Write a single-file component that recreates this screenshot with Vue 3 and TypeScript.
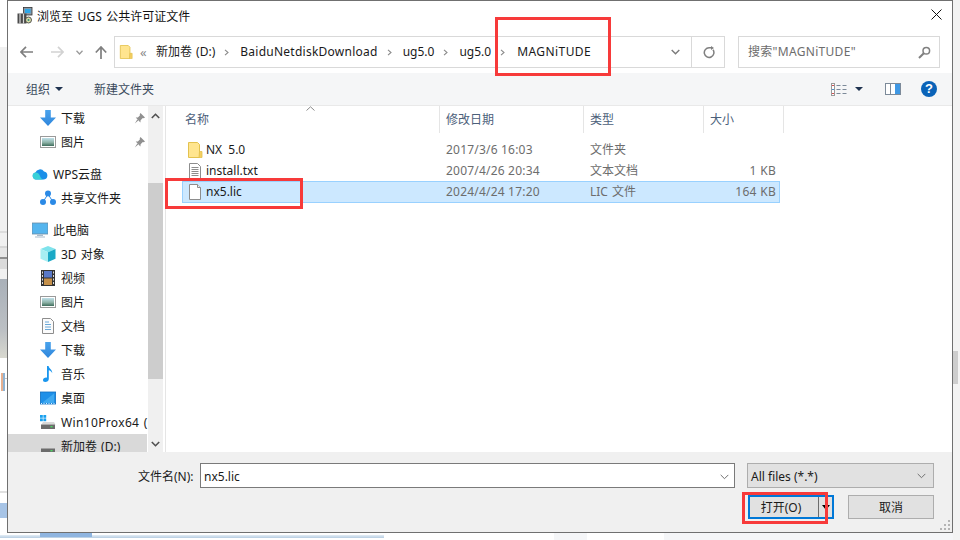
<script setup lang="ts">
interface NavItem { id: number; label: string; icon: string; level: 'root' | 'child'; pin?: boolean; gap?: boolean; active?: boolean; wide?: boolean }
interface FileRow { name: string; icon: string; date: string; type: string; size: string; selected?: boolean }
interface Crumb { label: string; kind: 'plain' | 'wide' | 'wider' }

const navItems: NavItem[] = [
  { id: 1, label: '下载', icon: 'i-down', level: 'child', pin: true },
  { id: 2, label: '图片', icon: 'i-pic', level: 'child', pin: true },
  { id: 3, label: 'WPS云盘', icon: 'i-cloud', level: 'root', gap: true },
  { id: 4, label: '共享文件夹', icon: 'i-share', level: 'child' },
  { id: 5, label: '此电脑', icon: 'i-pc', level: 'root', gap: true },
  { id: 6, label: '3D 对象', icon: 'i-cube', level: 'child' },
  { id: 7, label: '视频', icon: 'i-film', level: 'child' },
  { id: 8, label: '图片', icon: 'i-pic', level: 'child' },
  { id: 9, label: '文档', icon: 'i-doc', level: 'child' },
  { id: 10, label: '下载', icon: 'i-down', level: 'child' },
  { id: 11, label: '音乐', icon: 'i-music', level: 'child' },
  { id: 12, label: '桌面', icon: 'i-desk', level: 'child' },
  { id: 13, label: 'Win10Prox64 (C:)', icon: 'i-sys', level: 'child', wide: true },
  { id: 14, label: '新加卷 (D:)', icon: 'i-drive', level: 'child', active: true }
]

const crumbs: Crumb[] = [
  { label: '新加卷 (D:)', kind: 'plain' },
  { label: 'BaiduNetdiskDownload', kind: 'wide' },
  { label: 'ug5.0', kind: 'plain' },
  { label: 'ug5.0', kind: 'plain' },
  { label: 'MAGNiTUDE', kind: 'wider' }
]

const files: FileRow[] = [
  { name: 'NX 5.0', icon: 'i-folder', date: '2017/3/6 16:03', type: '文件夹', size: '' },
  { name: 'install.txt', icon: 'i-txt', date: '2007/4/26 20:34', type: '文本文档', size: '1 KB' },
  { name: 'nx5.lic', icon: 'i-blank', date: '2024/4/24 17:20', type: 'LIC 文件', size: '164 KB', selected: true }
]
</script>

<template>
  <div class="desktop">
    <svg class="defs" width="0" height="0" aria-hidden="true">
      <defs>
        <linearGradient id="g-blue" x1="0" y1="0" x2="0" y2="1"><stop offset="0" stop-color="#4aa3ec"/><stop offset="1" stop-color="#2f86dc"/></linearGradient>
        <linearGradient id="g-sky" x1="0" y1="0" x2="0" y2="1"><stop offset="0" stop-color="#bfe0ea"/><stop offset=".55" stop-color="#8fb3a8"/><stop offset="1" stop-color="#3f6d5c"/></linearGradient>
        <symbol id="i-down" viewBox="0 0 16 16"><path d="M5.2 0h5.6v7.4H16L8 16 0 7.4h5.2z" fill="url(#g-blue)"/></symbol>
        <symbol id="i-pic" viewBox="0 0 16 16"><rect x=".5" y="2.500" width="15" height="11" fill="#fff" stroke="#9a9a9a"/><rect x="2" y="4" width="12" height="8" fill="url(#g-sky)"/></symbol>
        <symbol id="i-cloud" viewBox="0 0 16 16"><path d="M4 13.500a3.500 3.500 0 0 1-.6-6.900A4.800 4.800 0 0 1 12 5.600a4 4 0 0 1 0 7.900z" fill="#1a8fe8"/><path d="M4 13.500a3.500 3.500 0 0 1-.6-6.900c1.600-.3 3.700.8 4.600 3.400.6 1.700 1.600 3 3.400 3.500z" fill="#39d0d8"/></symbol>
        <symbol id="i-share" viewBox="0 0 16 16"><g fill="#2b8ae6"><circle cx="8" cy="3.600" r="3"/><circle cx="3" cy="12" r="3"/><circle cx="13" cy="12" r="3"/></g><path d="M8 4 3 12M8 4l5 8" stroke="#2b8ae6" fill="none"/></symbol>
        <symbol id="i-pc" viewBox="0 0 16 16"><rect x="0" y="1" width="16" height="11" fill="#55b5ee" stroke="#6a8da6" stroke-width=".8"/><path d="M5 12.500h6v1.500H5zM3 14.500h10v1H3z" fill="#a9bccb"/></symbol>
        <symbol id="i-cube" viewBox="0 0 16 16"><path d="M8 0 15.500 3 8 6.200.5 3z" fill="#7fe3ec"/><path d="M.5 3 8 6.200V16L.5 12.800z" fill="#a7eef2"/><path d="M15.500 3 8 6.200V16l7.500-3.200z" fill="#1ba9c6"/></symbol>
        <symbol id="i-film" viewBox="0 0 16 16"><rect x="1" y="0" width="14" height="16" fill="#333"/><rect x="4" y="1" width="8" height="6.500" fill="#5a79c8"/><rect x="4" y="8.500" width="8" height="6.500" fill="#c5904a"/><g fill="#ddd"><rect x="2" y="1.500" width="1" height="2"/><rect x="2" y="5" width="1" height="2"/><rect x="2" y="8.500" width="1" height="2"/><rect x="2" y="12" width="1" height="2"/><rect x="13" y="1.500" width="1" height="2"/><rect x="13" y="5" width="1" height="2"/><rect x="13" y="8.500" width="1" height="2"/><rect x="13" y="12" width="1" height="2"/></g></symbol>
        <symbol id="i-doc" viewBox="0 0 16 16"><path d="M2.500.5h8l3 3v12h-11z" fill="#fbfbfb" stroke="#8d8d8d"/><path d="M5 4h4M5 6.500h6M5 9h6M5 11.500h6" stroke="#6aa8d8"/></symbol>
        <symbol id="i-music" viewBox="0 0 16 16"><path d="M7 0h1.600c.3 2.600 4 3.600 3.600 7.200-.7-1.600-2-2.600-3.400-2.900V13c0 1.800-1.700 3-3.600 3C3.600 16 3 15 3 14c0-1.500 2-2.700 4-2.300z" fill="#1a96ee"/></symbol>
        <symbol id="i-desk" viewBox="0 0 16 16"><rect x=".4" y="2" width="15.200" height="12" fill="#1e90e8" stroke="#0f6fc0" stroke-width=".8"/><path d="M2 13 14 3.500V13z" fill="#3fa9f0"/><path d="M1 13.500h14" stroke="#d8f0ff" stroke-dasharray="1 1.500"/></symbol>
        <symbol id="i-sys" viewBox="0 0 16 16"><g fill="#18a0ee"><rect x="0" y="1" width="2.800" height="2.800"/><rect x="3.400" y="1" width="2.800" height="2.800"/><rect x="0" y="4.400" width="2.800" height="2.800"/><rect x="3.400" y="4.400" width="2.800" height="2.800"/></g><path d="M1.500 10.500 3 8h11l1.500 2.500z" fill="#d9d9d9"/><rect x="1" y="10.500" width="14" height="4.500" fill="#6c6c6c"/><rect x="10.500" y="12" width="2" height="1.400" fill="#4cd964"/></symbol>
        <symbol id="i-drive" viewBox="0 0 16 16"><path d="M1.500 10.500 3 8h11l1.500 2.500z" fill="#d9d9d9"/><rect x="1" y="10.500" width="14" height="4.500" fill="#6c6c6c"/><rect x="10.500" y="12" width="2" height="1.400" fill="#4cd964"/></symbol>
        <symbol id="i-folder" viewBox="0 0 16 16"><path d="M1.500.5h9l2 2v13h-11z" fill="#ffe58f" stroke="#e3c24f"/><path d="M12.500 9.500h2.500v6h-3z" fill="#f4cf63" stroke="#e3c24f" stroke-width=".8"/></symbol>
        <symbol id="i-txt" viewBox="0 0 16 16"><path d="M2.500.5h8l3 3v12h-11z" fill="#fff" stroke="#8d8d8d"/><path d="M4.500 4.500h7M4.500 6.500h7M4.500 8.500h7M4.500 10.500h7M4.500 12.500h7" stroke="#8d8d8d"/></symbol>
        <symbol id="i-blank" viewBox="0 0 16 16"><path d="M2.500.5h8l3 3v12h-11z" fill="#fff" stroke="#8d8d8d"/><path d="M10.500.5v3h3" fill="#eee" stroke="#8d8d8d"/></symbol>
      </defs>
    </svg>

    <div class="bg bg-left-top"></div>
    <div class="bg bg-left-lines"></div>
    <div class="bg bg-left-photo"></div>
    <div class="bg bg-left-rule"></div>
    <div class="bg bg-left-tick"></div>
    <div class="bg bg-left-rule2"></div>
    <div class="bg bg-left-blue"></div>
    <div class="bg bg-bottom-line"></div>
    <div class="bg bg-bottom-blue"></div>
    <div class="bg bg-bottom-a"></div>
    <div class="bg bg-bottom-b"></div>
    <div class="bg bg-right"></div>
    <div class="bg bg-right-thumb"></div>

    <div class="window">
      <header class="titlebar">
        <svg class="app-icon" width="16" height="17" viewBox="0 0 16 17">
          <rect x="6.500" y=".5" width="8.500" height="7.500" fill="#8a9aa8" stroke="#333" stroke-width=".8"/>
          <rect x="8" y="2" width="5.500" height="4" fill="#2fa8e8"/>
          <path d="M.5 6.500h9v10h-9z" fill="#4a4a4a"/>
          <path d="M3 6.500v10M6.500 6.500v10" stroke="#d8d8d8" stroke-width="1.200"/>
          <circle cx="11.500" cy="13" r="3" fill="#d9dca8" stroke="#333" stroke-width=".8"/>
          <circle cx="11.500" cy="13" r="1" fill="#2f8a7a"/>
        </svg>
        <span class="title-text">浏览至 UGS 公共许可证文件</span>
        <svg class="close" width="11" height="11" viewBox="0 0 11 11"><path d="M.5.500l10 10M10.500.500l-10 10" stroke="#111" fill="none"/></svg>
      </header>

      <div class="navbar">
        <div class="nav-buttons">
          <svg class="nav-back" width="13" height="12" viewBox="0 0 13 12"><path d="M6 .8.900 6 6 11.200M1 6h12" stroke="#7f7f7f" stroke-width="1.700" fill="none"/></svg>
          <svg class="nav-forward" width="13" height="12" viewBox="0 0 13 12"><path d="M7 .8 12.100 6 7 11.200M12 6H0" stroke="#d2d2d2" stroke-width="1.700" fill="none"/></svg>
          <svg class="nav-recent" width="7" height="5" viewBox="0 0 7 5"><path d="M.5.800 3.500 4l3-3.200" stroke="#9a9a9a" stroke-width="1.300" fill="none"/></svg>
          <svg class="nav-up" width="12" height="13" viewBox="0 0 12 13"><path d="M.8 6.500 6 1l5.200 5.500M6 1v12" stroke="#7f7f7f" stroke-width="1.700" fill="none"/></svg>
        </div>
        <div class="address">
          <svg class="addr-folder" width="14" height="16" viewBox="0 0 16 16"><use href="#i-folder"/></svg>
          <span class="addr-more">«</span>
          <div class="crumbs">
            <template v-for="(c, i) in crumbs" :key="i">
              <svg v-if="i > 0" class="crumb-sep" width="5" height="7" viewBox="0 0 5 7"><path d="M1 .800 4 3.500 1 6.200" stroke="#8a8a8a" stroke-width="1.100" fill="none"/></svg>
              <span class="crumb" :class="c.kind">{{ c.label }}</span>
            </template>
          </div>
          <svg class="addr-drop" width="9" height="6" viewBox="0 0 9 6"><path d="M.7.900 4.500 4.700 8.300.9" stroke="#7a7a7a" stroke-width="1.400" fill="none"/></svg>
          <div class="addr-refresh">
            <svg width="12" height="13" viewBox="0 0 12 13"><path d="M10 3.800A4.800 4.800 0 1 1 6 1.800H9" stroke="#7f7f7f" stroke-width="1.500" fill="none"/><path d="M8 0l3 2-3 2z" fill="#7f7f7f"/></svg>
          </div>
        </div>
        <div class="search">
          <span class="search-text">搜索"MAGNiTUDE"</span>
          <svg width="13" height="13" viewBox="0 0 13 13"><circle cx="8.300" cy="4.700" r="3.300" stroke="#808080" stroke-width="1.500" fill="none"/><path d="M5.800 7.200 1 12" stroke="#808080" stroke-width="2" fill="none"/></svg>
        </div>
      </div>

      <div class="toolbar">
        <div class="tool tool-org"><span class="tool-text">组织</span><span class="caret"></span></div>
        <div class="tool tool-new"><span class="tool-text">新建文件夹</span></div>
        <div class="tool-right">
          <svg class="tb-view" width="16" height="13" viewBox="0 0 16 13">
            <rect x=".5" y=".5" width="3" height="12" fill="#fff" stroke="#9a9a9a"/>
            <path d="M1 2.500h2" stroke="#d05050"/><path d="M1 6.500h2" stroke="#4a90d0"/><path d="M1 10.500h2" stroke="#d05050"/>
            <path d="M5.500 2.500h4M5.500 6.500h4M5.500 10.500h4M11.500 2.500h4M11.500 6.500h4M11.500 10.500h4" stroke="#7c8a99"/>
          </svg>
          <span class="caret tb-caret"></span>
          <svg class="tb-pane" width="16" height="12" viewBox="0 0 16 12">
            <rect x=".5" y=".5" width="15" height="11" fill="#fff" stroke="#7c8a99"/>
            <path d="M5.500 1v10" stroke="#7c8a99"/>
            <rect x="10" y="1" width="5" height="10" fill="#3f98e4"/>
          </svg>
          <svg class="tb-help" width="16" height="16" viewBox="0 0 16 16">
            <circle cx="8" cy="8" r="8" fill="#0a63b8"/>
            <text x="8" y="12.300" text-anchor="middle" class="help-q">?</text>
          </svg>
        </div>
      </div>

      <div class="body">
        <nav class="sidebar">
          <div class="side-list">
            <div
              v-for="n in navItems"
              :key="n.id"
              class="side-row"
              :class="[n.level, { gap: n.gap, active: n.active }]"
            >
              <svg class="side-icon" width="16" height="16" viewBox="0 0 16 16"><use :href="'#' + n.icon"/></svg>
              <span class="side-label" :class="{ wide: n.wide }">{{ n.label }}</span>
              <svg v-if="n.pin" class="pin" width="11" height="11" viewBox="0 0 11 11"><path d="M6.500 0 11 4.500 9.800 5.300 8.800 5 6.600 7.200 6.400 9.400 1.700 4.600 3.900 4.400 6 2.300 5.700 1.200zM3.300 6.600l1 1L.8 10.600z" fill="#909090"/></svg>
            </div>
          </div>
          <div class="scrollbar">
            <svg class="sb-arrow" width="9" height="6" viewBox="0 0 9 6"><path d="M.8 5 4.500 1.300 8.200 5" stroke="#505050" stroke-width="1.600" fill="none"/></svg>
            <div class="sb-track"><div class="sb-thumb"></div></div>
            <svg class="sb-arrow" width="9" height="6" viewBox="0 0 9 6"><path d="M.8 1 4.500 4.700 8.200 1" stroke="#505050" stroke-width="1.600" fill="none"/></svg>
          </div>
        </nav>

        <section class="list">
          <div class="list-head">
            <svg class="sort" width="9" height="5" viewBox="0 0 9 5"><path d="M.5 4.500 4.500.8l4 3.700" stroke="#8a8a8a" fill="none"/></svg>
            <div class="hcell h-name">名称</div>
            <div class="hcell h-date">修改日期</div>
            <div class="hcell h-type">类型</div>
            <div class="hcell h-size">大小</div>
          </div>
          <div class="rows">
            <div v-for="f in files" :key="f.name" class="row" :class="{ selected: f.selected }">
              <div class="cell c-name">
                <svg width="16" height="16" viewBox="0 0 16 16"><use :href="'#' + f.icon"/></svg>
                <span>{{ f.name }}</span>
              </div>
              <div class="cell c-date">{{ f.date }}</div>
              <div class="cell c-type">{{ f.type }}</div>
              <div class="cell c-size">{{ f.size }}</div>
            </div>
          </div>
        </section>
      </div>

      <footer class="footer">
        <div class="f-row">
          <label class="f-label">文件名(N):</label>
          <div class="f-input">
            <span>nx5.lic</span>
            <svg width="9" height="6" viewBox="0 0 9 6"><path d="M.7.900 4.500 4.700 8.300.9" stroke="#707070" fill="none"/></svg>
          </div>
          <div class="f-select">
            <span class="select-text">All files (*.*)</span>
            <svg width="9" height="6" viewBox="0 0 9 6"><path d="M.7.900 4.500 4.700 8.300.9" stroke="#707070" fill="none"/></svg>
          </div>
        </div>
        <div class="f-row f-actions">
          <div class="btn btn-open">
            <span class="btn-main">打开(O)</span>
            <span class="btn-split"><span class="split-caret"></span></span>
          </div>
          <div class="btn btn-cancel"><span class="btn-label">取消</span></div>
        </div>
        <svg class="grip" width="11" height="11" viewBox="0 0 11 11">
          <g fill="#b4b4b4"><rect x="8" y="0" width="2" height="2"/><rect x="4" y="4" width="2" height="2"/><rect x="8" y="4" width="2" height="2"/><rect x="0" y="8" width="2" height="2"/><rect x="4" y="8" width="2" height="2"/><rect x="8" y="8" width="2" height="2"/></g>
        </svg>
      </footer>
    </div>

    <div class="mark mark-path"></div>
    <div class="mark mark-file"></div>
    <div class="mark mark-open"></div>
  </div>
</template>

<style scoped>
.desktop {
  position: relative;
  width: 960px;
  height: 540px;
  overflow: hidden;
  background: #fff;
  font-family: "Noto Sans", "Noto Sans CJK SC", sans-serif;
  font-size: 12px;
  line-height: 16px;
  color: #1a1a1a;
}
.defs { position: absolute; }
.bg { position: absolute; }
.bg-left-top { left: 0; top: 47px; width: 7px; height: 232px; background: #f0f0f0; }
.bg-left-lines { left: 0; top: 231px; width: 7px; height: 40px; background: linear-gradient(#dcdcdc 0 2px, #f0f0f0 2px 15px, #d6d6d6 15px 17px, #e6e6e6 17px 26px, #8f8f8f 26px 28px, #dadada 28px 38px, #f0f0f0 38px); }
.bg-left-photo { left: 0; top: 279px; width: 7px; height: 79px; background: linear-gradient(#a9b0b8, #bcc0c4 65%, #d8d8cf); }
.bg-left-rule { left: 0; top: 378px; width: 7px; height: 1px; background: #c4c4c4; }
.bg-left-tick { left: 0; top: 373px; width: 7px; height: 18px; background: linear-gradient(90deg, #fff 0 1px, #e6b090 1px 3px, #8fb4d4 3px 5px, transparent 5px); }
.bg-left-rule2 { left: 0; top: 491px; width: 7px; height: 2px; background: #e0e0e0; }
.bg-left-blue { left: 0; top: 503px; width: 7px; height: 15px; background: #a7c4e6; }
.bg-bottom-line { left: 0; top: 535px; width: 384px; height: 3px; background: linear-gradient(#e4edf5, #b6cde2); }
.bg-bottom-blue { left: 40px; top: 533px; width: 52px; height: 4px; background: #8fb5e0; }
.bg-bottom-a { left: 554px; top: 533px; width: 33px; height: 7px; background: #f5f6f8; }
.bg-bottom-b { left: 664px; top: 533px; width: 296px; height: 7px; background: #f5f6f8; }
.bg-right { left: 953px; top: 0; width: 7px; height: 540px; background: #f3f3f3; }
.bg-right-thumb { left: 953px; top: 351px; width: 5px; height: 33px; background: #cdcdcd; }

.window {
  position: absolute;
  left: 7px;
  top: 0;
  width: 946px;
  height: 533px;
  box-sizing: border-box;
  border: 1px solid #707070;
  background: #fff;
  display: flex;
  flex-direction: column;
}

.titlebar {
  height: 30px;
  flex: none;
  display: flex;
  align-items: center;
  padding: 0 9px 0 9px;
}
.app-icon { flex: none; margin-right: 4px; margin-top: -1px; }
.title-text { flex: 1; color: #111; margin-top: 1px; word-spacing: 1.5px; }
.close { flex: none; margin-right: 1px; margin-top: -3px; }

.navbar {
  height: 42px;
  flex: none;
  box-sizing: border-box;
  padding: 5px 12px 5px 0;
  display: flex;
}
.nav-buttons { width: 106px; flex: none; display: flex; align-items: center; padding-left: 12px; box-sizing: border-box; }
.nav-forward { margin-left: 18px; }
.nav-recent { margin-left: 12px; }
.nav-up { margin-left: 12px; }
.address {
  width: 611px;
  flex: none;
  box-sizing: border-box;
  border: 1px solid #d9d9d9;
  display: flex;
  align-items: center;
  padding-left: 4px;
}
.addr-folder { flex: none; }
.addr-more { flex: none; margin-left: 7px; width: 12px; color: #8a8a8a; font-size: 13px; }
.crumbs { flex: 1; display: flex; align-items: center; margin-left: 4px; white-space: nowrap; color: #1a1a1a; }
.crumb.plain { word-spacing: 1px; }
.crumb.wide { letter-spacing: .25px; }
.crumb.wider { letter-spacing: .42px; margin-left: 1px; }
.crumb-sep { margin: 0 11px 0 9px; flex: none; }
.addr-drop { flex: none; margin-right: 11px; }
.addr-refresh {
  width: 33px;
  align-self: stretch;
  border-left: 1px solid #d9d9d9;
  display: flex;
  align-items: center;
  justify-content: center;
  flex: none;
  padding-left: 1px;
  box-sizing: border-box;
}
.search {
  margin-left: 13px;
  width: 202px;
  flex: none;
  box-sizing: border-box;
  border: 1px solid #d9d9d9;
  display: flex;
  align-items: center;
  justify-content: space-between;
  padding: 0 8px 0 9px;
}
.search-text { color: #6d6d6d; letter-spacing: .3px; }

.toolbar {
  height: 33px;
  flex: none;
  box-sizing: border-box;
  background: #f5f6f7;
  border-bottom: 1px solid #e9e9e9;
  display: flex;
  align-items: center;
  padding-left: 18px;
  color: #3a4a5c;
}
.tool { display: flex; align-items: center; }
.tool-text { padding-top: 2px; }
.tool-new { margin-left: 31px; }
.caret {
  width: 0;
  height: 0;
  border-left: 4px solid transparent;
  border-right: 4px solid transparent;
  border-top: 4px solid #1f3350;
  margin-left: 5px;
}
.tool-right { margin-left: auto; display: flex; align-items: center; padding-right: 15px; }
.tb-caret { margin-left: 8px; }
.tb-pane { margin-left: 22px; }
.tb-help { margin-left: 20px; }
.help-q { fill: #fff; font-size: 13px; font-weight: 700; font-family: "Liberation Sans", sans-serif; }

.body { flex: 1; min-height: 0; display: flex; overflow: hidden; }

.sidebar {
  width: 158px;
  flex: none;
  display: flex;
  overflow: hidden;
  border-right: 1px solid #e5e5e5;
  box-sizing: border-box;
}
.side-list { width: 140px; flex: none; overflow: hidden; }
.side-row {
  height: 24px;
  display: flex;
  align-items: center;
  white-space: nowrap;
  position: relative;
  color: #1a1a1a;
}
.side-row.root { padding-left: 24px; }
.side-row.child { padding-left: 32px; }
.side-row.gap { margin-top: 8px; }
.side-row.active { background: #d9d9d9; margin-right: 1px; }
.side-icon { flex: none; margin-right: 5px; }
.side-label { padding-top: 1px; word-spacing: 1px; }
.side-label.wide { letter-spacing: .35px; }
.pin { position: absolute; right: 3px; top: 7px; }

.scrollbar {
  width: 15px;
  flex: none;
  background: #f0f0f0;
  display: flex;
  flex-direction: column;
  align-items: center;
}
.sb-arrow { flex: none; margin: 7px 0 5px; }
.sb-track { flex: 1; width: 100%; }
.sb-thumb { width: 100%; height: 196px; margin-top: 59px; background: #cdcdcd; }

.list { flex: 1; min-width: 0; position: relative; }
.list-head {
  position: relative;
  height: 27px;
  display: grid;
  grid-template-columns: 274px 144px 120px 80px;
  justify-content: start;
  color: #4c607a;
}
.sort { position: absolute; left: 140px; top: 0; }
.hcell {
  border-right: 1px solid #e5e5e5;
  padding-left: 6px;
  padding-top: 6px;
  height: 27px;
  box-sizing: border-box;
}
.h-name { padding-left: 19px; }
.rows { margin: 6px 0 0 16px; width: 598px; }
.row {
  height: 21px;
  display: grid;
  grid-template-columns: 258px 144px 120px 72px;
  align-items: center;
  box-sizing: border-box;
  color: #6d6d6d;
}
.row.selected { height: 22px; background: #cce8ff; box-shadow: inset 0 0 0 1px #99d1ff; }
.c-name { display: flex; align-items: center; padding-left: 5px; color: #1a1a1a; }
.c-name span { margin-left: 3px; word-spacing: 3px; }
.c-date { padding-left: 6px; letter-spacing: .2px; }
.c-type { padding-left: 6px; word-spacing: 1px; }
.c-size { text-align: right; letter-spacing: .3px; }

.footer {
  height: 80px;
  flex: none;
  background: #f0f0f0;
  box-sizing: border-box;
  padding: 11px 18px 0 0;
  position: relative;
}
.f-row { display: flex; align-items: center; }
.f-label { margin-left: 130px; width: 62px; flex: none; padding-top: 2px; }
.f-input {
  width: 535px;
  height: 25px;
  box-sizing: border-box;
  border: 1px solid #7a7a7a;
  background: #fff;
  display: flex;
  align-items: center;
  justify-content: space-between;
  padding: 2px 5px 0 3px;
  flex: none;
}
.f-select {
  margin-left: 12px;
  width: 187px;
  height: 25px;
  box-sizing: border-box;
  border: 1px solid #adadad;
  background: #e1e1e1;
  display: flex;
  align-items: center;
  justify-content: space-between;
  padding: 0 7px 0 3px;
  flex: none;
}
.select-text { padding-top: 2px; }
.f-actions { justify-content: flex-end; margin-top: 7px; gap: 14px; }
.btn {
  width: 86px;
  height: 24px;
  box-sizing: border-box;
  background: #e1e1e1;
  border: 1px solid #adadad;
  display: flex;
  align-items: center;
  justify-content: center;
}
.btn-label { padding-top: 1px; }
.btn-open { border: 2px solid #0078d7; justify-content: flex-start; }
.btn-main { width: 62px; text-align: center; padding-top: 1px; flex: none; margin-right: 6px; }
.btn-split { flex: 1; height: 100%; border-left: 1px solid #6d6d6d; display: flex; align-items: center; justify-content: center; box-sizing: border-box; }
.split-caret { width: 0; height: 0; border-left: 4px solid transparent; border-right: 4px solid transparent; border-top: 5px solid #000; }
.grip { position: absolute; right: 1px; bottom: 1px; }

.mark { position: absolute; box-sizing: border-box; border: 3px solid #f73a3a; }
.mark-path { left: 495px; top: 17px; width: 116px; height: 59px; }
.mark-file { left: 165px; top: 178px; width: 138px; height: 31px; }
.mark-open { left: 742px; top: 492px; width: 86px; height: 32px; }
</style>
